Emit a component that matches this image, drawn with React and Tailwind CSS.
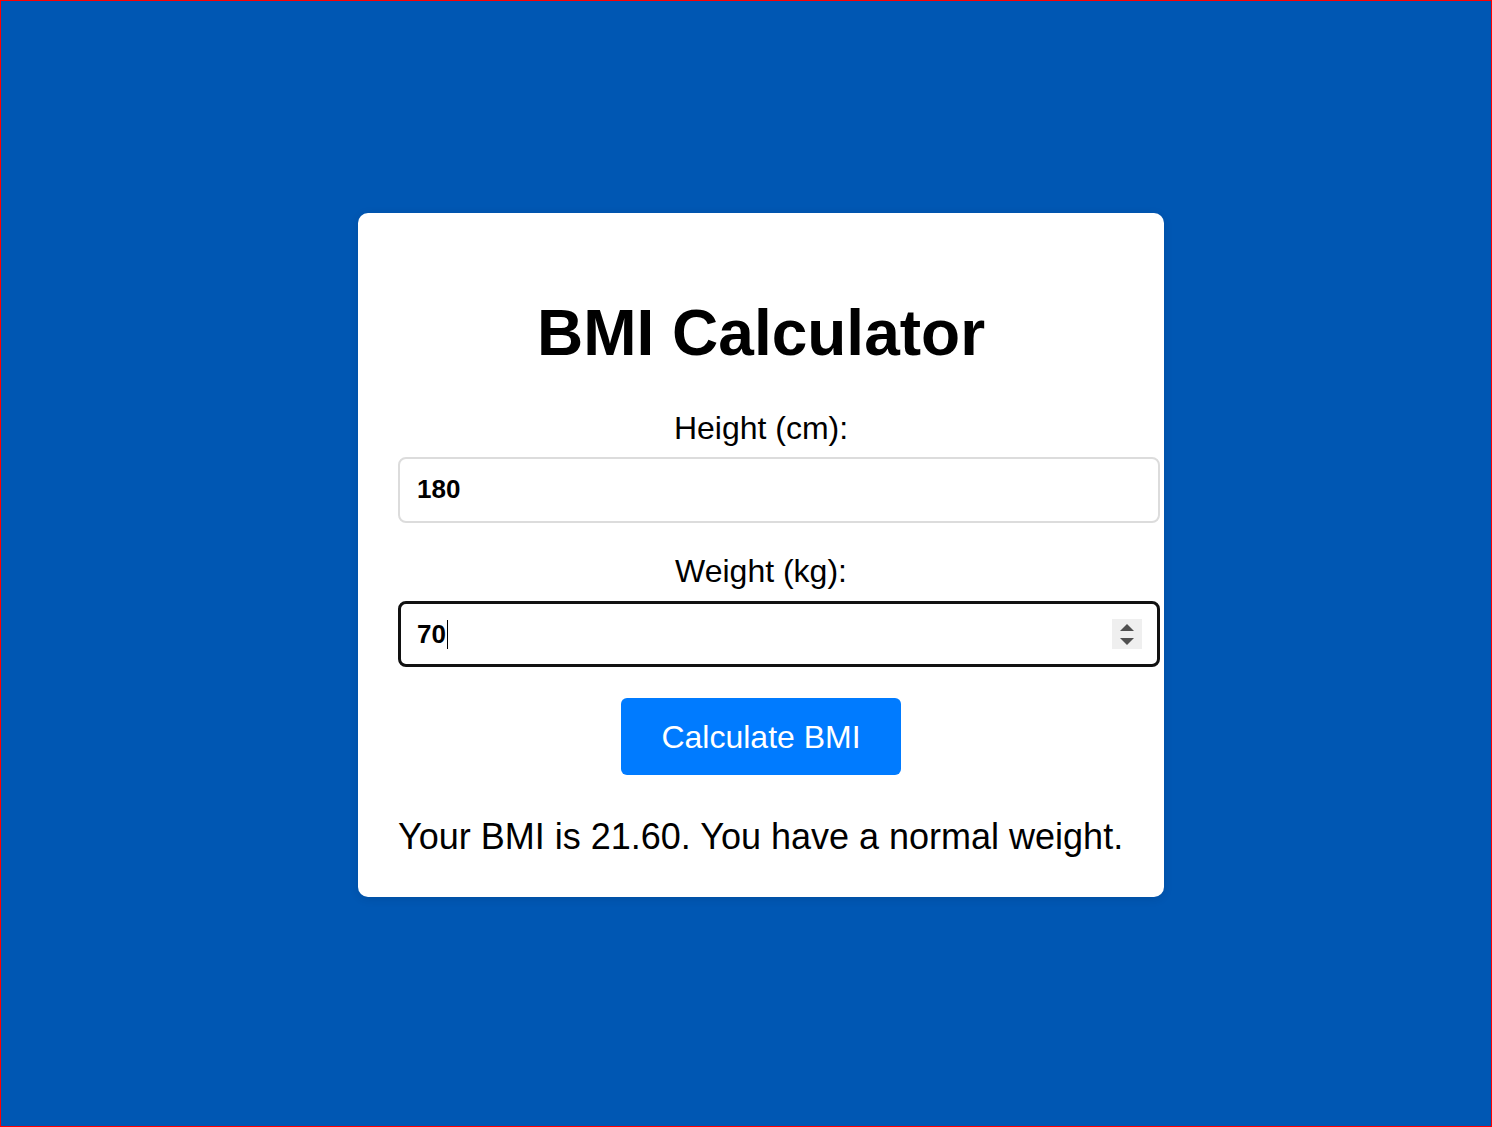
import { useState } from 'react';

function Spinner() {
  return (
    <div className="absolute right-[15px] top-[15px] flex h-[30px] w-[30px] flex-col items-center justify-center gap-[7px] bg-[#efefef]">
      <svg width="14" height="7" viewBox="0 0 14 7">
        <path d="M7 0L14 7H0z" fill="#505050" />
      </svg>
      <svg width="14" height="7" viewBox="0 0 14 7">
        <path d="M0 0h14L7 7z" fill="#505050" />
      </svg>
    </div>
  );
}

export default function App() {
  const [height, setHeight] = useState('180');
  const weight = '70';

  return (
    <div
      className="flex min-h-screen items-center justify-center border border-[#ff0000] bg-[#0057b3] pb-[17px] pl-[30px]"
      style={{ fontFamily: '"Liberation Sans", Arial, sans-serif' }}
    >
      <div className="w-[806px] rounded-[10px] bg-white px-10 pb-10 pt-[83px] text-black shadow-[0_2px_10px_rgba(0,0,0,0.1)]">
        <h1 className="mb-[40px] text-center text-[64px] font-bold leading-[74px]">BMI Calculator</h1>

        <label className="mb-[10px] block text-center text-[32px] leading-[37px]">Height (cm):</label>
        <input
          type="text"
          value={height}
          onChange={(e) => setHeight(e.target.value)}
          className="block h-[66px] w-[762px] max-w-none rounded-[8px] border-2 border-[#dcdcdc] pb-[2px] pl-[17px] text-[26px] font-bold text-black outline-none"
        />

        <label className="mb-[11px] mt-[30px] block text-center text-[32px] leading-[37px]">Weight (kg):</label>
        <div className="relative flex h-[66px] w-[762px] items-center rounded-[8px] border-[3px] border-[#111] pl-4">
          <span className="text-[26px] font-bold leading-[30px]">{weight}</span>
          <span className="ml-px h-[29px] w-px bg-black" />
          <Spinner />
        </div>

        <div className="mt-[31px] flex justify-center">
          <button className="h-[77px] w-[280px] rounded-[6px] bg-[#007bff] text-[32px] text-white">
            Calculate BMI
          </button>
        </div>

        <p className="mt-[41px] text-[36px] leading-[41px]">Your BMI is 21.60. You have a normal weight.</p>
      </div>
    </div>
  );
}
